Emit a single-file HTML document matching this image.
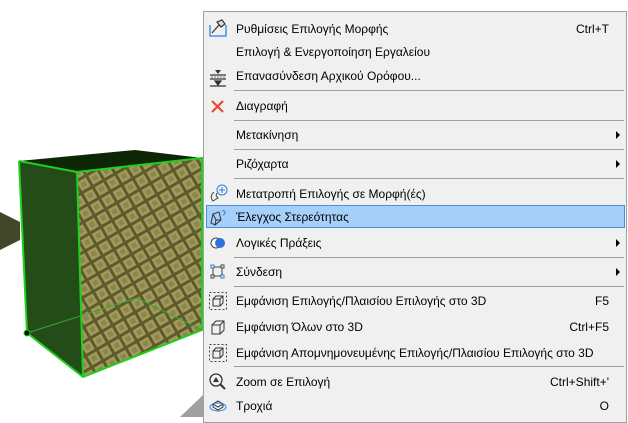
<!DOCTYPE html>
<html><head><meta charset="utf-8"><style>
html,body{margin:0;padding:0;width:628px;height:417px;overflow:hidden;background:#fff;font-family:"Liberation Sans","DejaVu Sans",sans-serif;}
#menu{position:absolute;left:203px;top:11px;width:422px;height:410px;background:#f0f0f0;border:1px solid #a0a0a0;}
.it{position:absolute;left:32px;font-size:12px;color:#000;white-space:nowrap;line-height:14px;}
.sc{position:absolute;right:17px;font-size:12px;color:#000;line-height:14px;}
.ar{position:absolute;left:412px;width:0;height:0;border-top:4px solid transparent;border-bottom:4px solid transparent;border-left:4px solid #000;}
.sep{position:absolute;left:30px;right:2px;height:1px;background:#a0a0a0;}
.hl{position:absolute;left:2px;right:1px;top:193px;height:23px;background:#a6d0fa;border:1px solid #4a8fd8;box-sizing:border-box;}
.ic{position:absolute;left:4px;}
</style></head><body>
<svg width="203" height="417" style="position:absolute;left:0;top:0">
<defs>
<pattern id="tex" width="13" height="13" patternUnits="userSpaceOnUse" patternTransform="rotate(-30)">
<rect width="13" height="13" fill="#5e5a2c"/>
<rect x="1.5" y="1.5" width="10" height="10" fill="#a09a5c"/>
<rect x="4" y="4" width="5" height="5" fill="#8c8648"/>
</pattern>
</defs>
<polygon points="0,212 20,222 20,240 0,250" fill="#43472a"/>
<polygon points="180,417 203,395 203,417" fill="#a0a0a0"/>
<polygon points="19,161 135,150 202,158 77,172" fill="#0c2606"/>
<polygon points="19,161 77,172 83,377 27,333" fill="#244c18"/>
<polygon points="77,172 202,158 202,330 83,377" fill="url(#tex)"/>
<polyline points="19,161 77,172 202,158 202,330 83,377 27,333 19,161" fill="none" stroke="#1fd01f" stroke-width="2"/>
<line x1="77" y1="172" x2="83" y2="377" stroke="#1fd01f" stroke-width="2"/>
<polyline points="27,333 137,298 202,330" fill="none" stroke="#33a833" stroke-width="1"/>
<circle cx="27" cy="333" r="3" fill="#000" stroke="#1fd01f"/>
</svg>
<div id="menu">
<div class="hl"></div>
<svg class="ic" style="top:6px" width="20" height="20"><path d="M2 7V18H18V7" fill="none" stroke="#2f7fe0" stroke-width="1.3"/><path d="M4 15L11 7M9 4L14 2L17 6L13 9Z" fill="#ddd" stroke="#333" stroke-width="1.2"/></svg>
<div class="it" style="top:10px">Ρυθμίσεις Επιλογής Μορφής</div><div class="sc" style="top:10px">Ctrl+T</div>
<div class="it" style="top:33px">Επιλογή &amp; Ενεργοποίηση Εργαλείου</div>
<svg class="ic" style="top:56px" width="20" height="20"><path d="M7 2H13L10 6Z" fill="#333"/><path d="M2 7H18M2 11H18M7 13H13L10 17Z M2 18H18" stroke="#333" fill="#333" stroke-width="1.2"/><path d="M3 9H17" stroke="#777" stroke-dasharray="2 1"/></svg>
<div class="it" style="top:57px">Επανασύνδεση Αρχικού Ορόφου...</div>
<div class="sep" style="top:78px"></div>
<svg class="ic" style="top:85px" width="20" height="20"><path d="M4 4L15 15M15 4L4 15" stroke="#e8452a" stroke-width="2"/></svg>
<div class="it" style="top:87px">Διαγραφή</div>
<div class="sep" style="top:108px"></div>
<div class="it" style="top:116px">Μετακίνηση</div><div class="ar" style="top:119px"></div>
<div class="sep" style="top:137px"></div>
<div class="it" style="top:145px">Ριζόχαρτα</div><div class="ar" style="top:148px"></div>
<div class="sep" style="top:166px"></div>
<svg class="ic" style="top:172px" width="22" height="20"><circle cx="14" cy="6" r="5" fill="none" stroke="#2f7fe0"/><path d="M14 3V9M11 6H17" stroke="#2f7fe0"/><path d="M6 8Q1 12 5 17L10 14Q7 12 9 9" fill="none" stroke="#444"/></svg>
<div class="it" style="top:175px">Μετατροπή Επιλογής σε Μορφή(ές)</div>
<svg class="ic" style="top:196px" width="22" height="20"><path d="M3 15L5 6L11 4L13 12L7 17Z M5 6L8 12L13 12M8 12L7 17" fill="none" stroke="#333"/><path d="M14 3Q17 2 17 5Q16 7 15 7" fill="none" stroke="#2f7fe0"/></svg>
<div class="it" style="top:198px">Έλεγχος Στερεότητας</div>
<svg class="ic" style="top:221px" width="22" height="20"><circle cx="8" cy="10" r="5" fill="#fff" stroke="#444"/><circle cx="12" cy="10" r="5" fill="#2f6fe0"/></svg>
<div class="it" style="top:224px">Λογικές Πράξεις</div><div class="ar" style="top:227px"></div>
<div class="sep" style="top:245px"></div>
<svg class="ic" style="top:250px" width="20" height="20"><rect x="3" y="3" width="3" height="3" fill="none" stroke="#2f7fe0"/><rect x="13" y="3" width="3" height="3" fill="none" stroke="#444"/><rect x="3" y="13" width="3" height="3" fill="none" stroke="#444"/><rect x="13" y="13" width="3" height="3" fill="none" stroke="#2f7fe0"/><path d="M6 5H13M5 6V13M6 14H13M14 6V13" stroke="#444"/></svg>
<div class="it" style="top:253px">Σύνδεση</div><div class="ar" style="top:256px"></div>
<div class="sep" style="top:274px"></div>
<svg class="ic" style="top:279px" width="20" height="20"><rect x="1.5" y="1.5" width="17" height="17" fill="none" stroke="#444" stroke-dasharray="2 2"/><path d="M5 8H12V15H5Z M5 8L8 5H15V12L12 15M12 8L15 5" fill="none" stroke="#333"/></svg>
<div class="it" style="top:282px">Εμφάνιση Επιλογής/Πλαισίου Επιλογής στο 3D</div><div class="sc" style="top:282px">F5</div>
<svg class="ic" style="top:305px" width="20" height="20"><path d="M4 8H12V17H4Z M4 8L8 4H16V13L12 17M12 8L16 4" fill="none" stroke="#333"/></svg>
<div class="it" style="top:308px">Εμφάνιση Όλων στο 3D</div><div class="sc" style="top:308px">Ctrl+F5</div>
<svg class="ic" style="top:331px" width="20" height="20"><rect x="1.5" y="1.5" width="17" height="17" fill="none" stroke="#444" stroke-dasharray="2 2"/><path d="M5 8H12V15H5Z M5 8L8 5H15V12L12 15M12 8L15 5" fill="none" stroke="#333"/></svg>
<div class="it" style="top:334px">Εμφάνιση Απομνημονευμένης Επιλογής/Πλαισίου Επιλογής στο 3D</div>
<div class="sep" style="top:354px"></div>
<svg class="ic" style="top:360px" width="20" height="20"><circle cx="8" cy="8" r="6" fill="none" stroke="#333" stroke-width="1.3"/><path d="M12 12L17 17" stroke="#333" stroke-width="2"/><path d="M8 5L5 10H11Z" fill="#333"/></svg>
<div class="it" style="top:363px">Zoom σε Επιλογή</div><div class="sc" style="top:363px">Ctrl+Shift+'</div>
<svg class="ic" style="top:384px" width="20" height="20"><path d="M5 8L10 5L15 8L10 11Z M5 8V11L10 14L15 11V8" fill="none" stroke="#333"/><ellipse cx="10" cy="11" rx="8" ry="4" fill="none" stroke="#2f7fe0"/></svg>
<div class="it" style="top:387px">Τροχιά</div><div class="sc" style="top:387px">O</div>
</div>
</body></html>
